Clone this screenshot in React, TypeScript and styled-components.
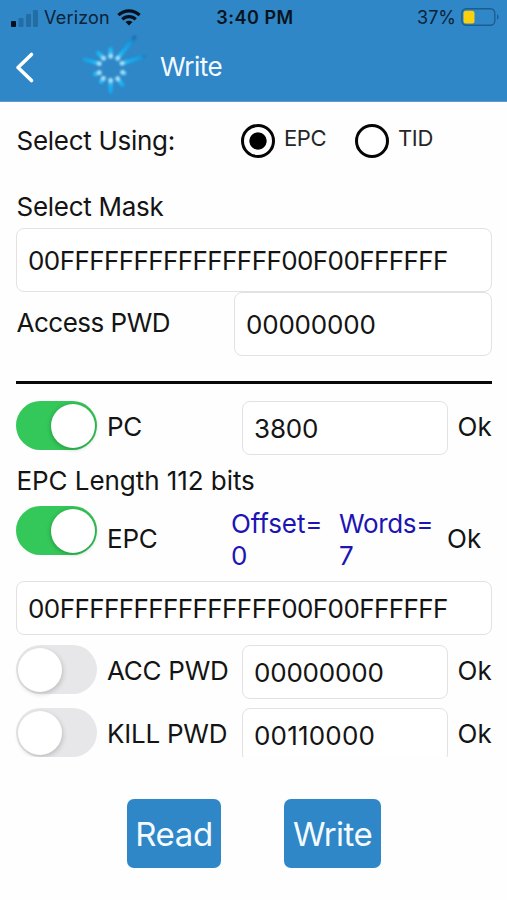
import React, { useState } from 'react';
import styled, { createGlobalStyle } from 'styled-components';

const BLUE = '#2f87c7';
const INK = '#141414';

const GlobalStyle = createGlobalStyle`
  * { box-sizing: border-box; }
  body { margin: 0; background: #fefefe; }
  button { font: inherit; border: 0; padding: 0; margin: 0; cursor: pointer; }
`;

const Screen = styled.div`
  width: 507px;
  height: 900px;
  display: flex;
  flex-direction: column;
  overflow: hidden;
  background: #fefefe;
  color: ${INK};
  font-family: Inter, 'Liberation Sans', sans-serif;
`;

const Header = styled.header`
  flex: none;
  height: 102px;
  background: ${BLUE};
  border-bottom: 1px solid #5f9cc8;
`;

const StatusBar = styled.div`
  height: 34px;
  display: grid;
  grid-template-columns: 1fr auto 1fr;
  align-items: center;
  padding: 1px 8px 0 11px;
  color: #0b2238;
  font-size: 18px;
  line-height: 33px;
`;

const Carrier = styled.div`
  display: flex;
  align-items: center;
  letter-spacing: 0.2px;
  svg { flex: none; }
  span { margin: 0 7px 0 6px; }
`;

const Clock = styled.div`
  color: #071420;
  font-weight: 600;
  letter-spacing: 0.5px;
`;

const Power = styled.div`
  display: flex;
  justify-content: flex-end;
  align-items: center;
  gap: 5px;
  svg { margin-top: -2px; }
`;

const NavBar = styled.div`
  height: 64px;
  display: flex;
  align-items: center;
  color: #f4faff;
`;

const BackButton = styled.button`
  width: 40px;
  height: 40px;
  margin: 2px 35px 0 0;
  background: none;
  svg { display: block; }
`;

const Title = styled.h1`
  margin: 0 0 0 5px;
  font-size: 26px;
  font-weight: 400;
  letter-spacing: -0.5px;
`;

const Form = styled.main`
  flex: none;
  height: 655px;
  overflow: hidden;
  padding: 0 15px 0 16px;
  font-size: 26px;
`;

const Row = styled.div<{ $height: number }>`
  display: flex;
  align-items: flex-start;
  height: ${p => p.$height}px;
`;

const Label = styled.span<{ $top?: number; $width?: number; $track?: number; $inset?: number }>`
  flex: none;
  width: ${p => (p.$width ? `${p.$width}px` : 'auto')};
  padding-top: ${p => p.$top ?? 0}px;
  padding-left: ${p => p.$inset ?? 0}px;
  line-height: 32px;
  letter-spacing: ${p => p.$track ?? 0}px;
  white-space: nowrap;
`;

const Radio = styled.button<{ $width: number }>`
  display: flex;
  align-items: flex-start;
  width: ${p => p.$width}px;
  padding-top: 22px;
  background: none;
  color: #262626;
  font-size: 22px;
  line-height: 28px;
  text-align: left;
  letter-spacing: -0.35px;
`;

const RadioRing = styled.i<{ $on: boolean }>`
  flex: none;
  width: 34px;
  height: 34px;
  margin-right: 9px;
  border: 3px solid #050505;
  border-radius: 50%;
  background: ${p => (p.$on ? 'radial-gradient(circle, #000 8.2px, #fff 9px)' : '#fff')};
`;

const Field = styled.input<{ $height: number; $width?: number; $track?: number; $shift?: number }>`
  flex: none;
  display: block;
  width: ${p => (p.$width ? `${p.$width}px` : '100%')};
  height: ${p => p.$height}px;
  padding: ${p => p.$shift ?? 0}px 10px 0 11px;
  border: 1.5px solid #e2e2e4;
  border-radius: 8px;
  outline: none;
  background: #fff;
  color: ${INK};
  font: 400 26px Inter, 'Liberation Sans', sans-serif;
  letter-spacing: ${p => p.$track ?? 0}px;
`;

const Divider = styled.hr`
  height: 3px;
  margin: 0 0 17px;
  border: 0;
  background: #080808;
`;

const Track = styled.button<{ $on: boolean }>`
  flex: none;
  display: flex;
  align-items: center;
  justify-content: ${p => (p.$on ? 'flex-end' : 'flex-start')};
  width: 81px;
  height: 49px;
  margin-right: 10px;
  padding: 0 2px;
  border-radius: 25px;
  background: ${p => (p.$on ? '#34c759' : '#e7e7e9')};
`;

const Knob = styled.i<{ $on: boolean }>`
  width: 44px;
  height: 44px;
  border-radius: 50%;
  background: #fff;
  box-shadow: ${p => (p.$on ? '0 1px 4px rgba(0, 60, 20, 0.4)' : '1px 2px 5px rgba(0, 0, 0, 0.18)')};
`;

const Stat = styled.span<{ $width: number; $track?: number }>`
  flex: none;
  width: ${p => p.$width}px;
  padding: 2px 0 0 1px;
  color: #1c14b4;
  line-height: 31.5px;
  letter-spacing: ${p => p.$track ?? 0}px;
`;

const MemoryBanks = styled.section`
  display: grid;
  gap: 9px;
  padding-top: 10px;
`;

const Actions = styled.footer`
  display: flex;
  gap: 63px;
  padding: 42px 0 0 127px;
`;

const Action = styled.button<{ $width: number; $track: number }>`
  width: ${p => p.$width}px;
  height: 69px;
  padding-top: 1px;
  border-radius: 7px;
  background: ${BLUE};
  color: #f4faff;
  font-size: 33px;
  letter-spacing: ${p => p.$track}px;
`;

function SignalIcon() {
  return (
    <svg width="27" height="18" viewBox="0 0 27 18">
      <rect x="0" y="12" width="5" height="6" rx="1" fill="#04101c" />
      <rect x="7.5" y="9" width="5" height="9" rx="1" fill="#246da4" />
      <rect x="15" y="5" width="5" height="13" rx="1" fill="#246da4" />
      <rect x="22" y="1" width="5" height="17" rx="1" fill="#246da4" />
    </svg>
  );
}

function WifiIcon() {
  return (
    <svg width="24" height="17" viewBox="0 0 24 17" fill="none" stroke="#04101c" strokeWidth="3.1">
      <path d="M1.4 6.2a15.2 15.2 0 0 1 21.2 0" />
      <path d="M5.3 10.3a9.6 9.6 0 0 1 13.4 0" />
      <path d="M12 16.6 8.5 13.1a5 5 0 0 1 7 0z" fill="#04101c" stroke="none" />
    </svg>
  );
}

function BatteryIcon() {
  return (
    <svg width="38" height="18" viewBox="0 0 38 18">
      <rect x="0.8" y="0.8" width="33" height="16.4" rx="4.5" fill="none" stroke="#1d5c8c" strokeWidth="1.4" />
      <rect x="2.5" y="2.8" width="11" height="12.6" rx="2.5" fill="#fbd00f" />
      <path d="M36 6.3q1.7 1 1.7 2.7T36 11.7z" fill="#1d5c8c" />
    </svg>
  );
}

const RAYS: [number, number, number, number, number][] = [
  [107, 82, 107, 60, 13],
  [128, 88, 178, 26, 12],
  [141, 103, 206, 83, 12],
  [143, 130, 149, 133, 13],
  [128, 149, 142, 168, 13],
  [107, 154, 107, 188, 13],
  [85, 148, 78, 159, 13],
  [73, 131, 60, 136, 13],
  [73, 104, 28, 91, 12],
  [86, 88, 69, 71, 13],
];

function BurstLogo() {
  return (
    <svg width="80" height="75" viewBox="0 0 240 225">
      <defs>
        <radialGradient id="ray" gradientUnits="userSpaceOnUse" cx="107" cy="117" r="118">
          <stop offset="0.3" stopColor="#4cc6f6" />
          <stop offset="0.5" stopColor="#17aff0" />
          <stop offset="0.8" stopColor="#189bdd" />
          <stop offset="1" stopColor="#176aaa" />
        </radialGradient>
        <filter id="glow" filterUnits="userSpaceOnUse" x="0" y="0" width="240" height="225">
          <feGaussianBlur stdDeviation="2.4" />
        </filter>
      </defs>
      <g filter="url(#glow)">
        {RAYS.map(([x1, y1, x2, y2, w]) => (
          <path key={`${x1}-${y1}`} d={`M${x1} ${y1}L${x2} ${y2}`} stroke="url(#ray)" strokeWidth={w} strokeLinecap="round" />
        ))}
        {RAYS.map(([x, y]) => (
          <circle key={`${x}-${y}`} cx={x} cy={y} r="7" fill="#a4e2fa" />
        ))}
      </g>
    </svg>
  );
}

function Toggle({ initial = false }: { initial?: boolean }) {
  const [on, setOn] = useState(initial);
  return (
    <Track type="button" role="switch" aria-checked={on} $on={on} onClick={() => setOn(!on)}>
      <Knob $on={on} />
    </Track>
  );
}

function MemoryRow({ name, value, track }: { name: string; value: string; track: number }) {
  return (
    <Row $height={54}>
      <Toggle />
      <Label $top={10} $width={135} $track={-0.25}>{name}</Label>
      <Field $width={206} $height={54} $track={track} defaultValue={value} />
      <Label $top={10} $inset={9.5}>Ok</Label>
    </Row>
  );
}

export default function App() {
  const [bank, setBank] = useState<'EPC' | 'TID'>('EPC');
  return (
    <Screen>
      <GlobalStyle />
      <Header>
        <StatusBar>
          <Carrier>
            <SignalIcon />
            <span>Verizon</span>
            <WifiIcon />
          </Carrier>
          <Clock>3:40 PM</Clock>
          <Power>
            37%
            <BatteryIcon />
          </Power>
        </StatusBar>
        <NavBar>
          <BackButton type="button" aria-label="Back">
            <svg width="40" height="40" viewBox="0 0 40 40" fill="none" stroke="#fff" strokeWidth="3.6" strokeLinecap="round" strokeLinejoin="round">
              <path d="M31.5 7.5 18 20.5l13.5 13" />
            </svg>
          </BackButton>
          <BurstLogo />
          <Title>Write</Title>
        </NavBar>
      </Header>

      <Form>
        <Row $height={89}>
          <Label $top={23} $inset={0.5} $width={225} $track={-0.28}>Select Using:</Label>
          <Radio type="button" $width={114} onClick={() => setBank('EPC')}>
            <RadioRing $on={bank === 'EPC'} />
            EPC
          </Radio>
          <Radio type="button" $width={90} onClick={() => setBank('TID')}>
            <RadioRing $on={bank === 'TID'} />
            TID
          </Radio>
        </Row>
        <Row $height={37}>
          <Label $inset={0.5} $track={-0.27}>Select Mask</Label>
        </Row>
        <Field $height={64} $track={-0.58} $shift={1} defaultValue="00FFFFFFFFFFFFFFF00F00FFFFFF" />
        <Row $height={89}>
          <Label $top={15} $inset={0.5} $width={218} $track={-0.5}>Access PWD</Label>
          <Field $width={258} $height={64} $track={-0.2} defaultValue="00000000" />
        </Row>
        <Divider />
        <Row $height={64}>
          <Toggle initial />
          <Label $top={10} $width={135} $track={-0.3}>PC</Label>
          <Field $width={206} $height={54} $shift={1} $track={-0.15} defaultValue="3800" />
          <Label $top={10} $inset={9.5}>Ok</Label>
        </Row>
        <Row $height={41}>
          <Label $inset={0.5} $track={-0.06}>EPC Length 112 bits</Label>
        </Row>
        <Row $height={75}>
          <Toggle initial />
          <Label $top={17} $width={123} $track={-0.2}>EPC</Label>
          <Stat $width={108} $track={-0.1}>Offset=<br />0</Stat>
          <Stat $width={108} $track={-0.35}>Words=<br />7</Stat>
          <Label $top={17} $inset={1}>Ok</Label>
        </Row>
        <Field $height={54} $track={-0.58} defaultValue="00FFFFFFFFFFFFFFF00F00FFFFFF" />
        <MemoryBanks>
          <MemoryRow name="ACC PWD" value="00000000" track={-0.2} />
          <MemoryRow name="KILL PWD" value="00110000" track={0.2} />
        </MemoryBanks>
      </Form>

      <Actions>
        <Action type="button" $width={94} $track={-0.4}>Read</Action>
        <Action type="button" $width={97} $track={-0.6}>Write</Action>
      </Actions>
    </Screen>
  );
}
